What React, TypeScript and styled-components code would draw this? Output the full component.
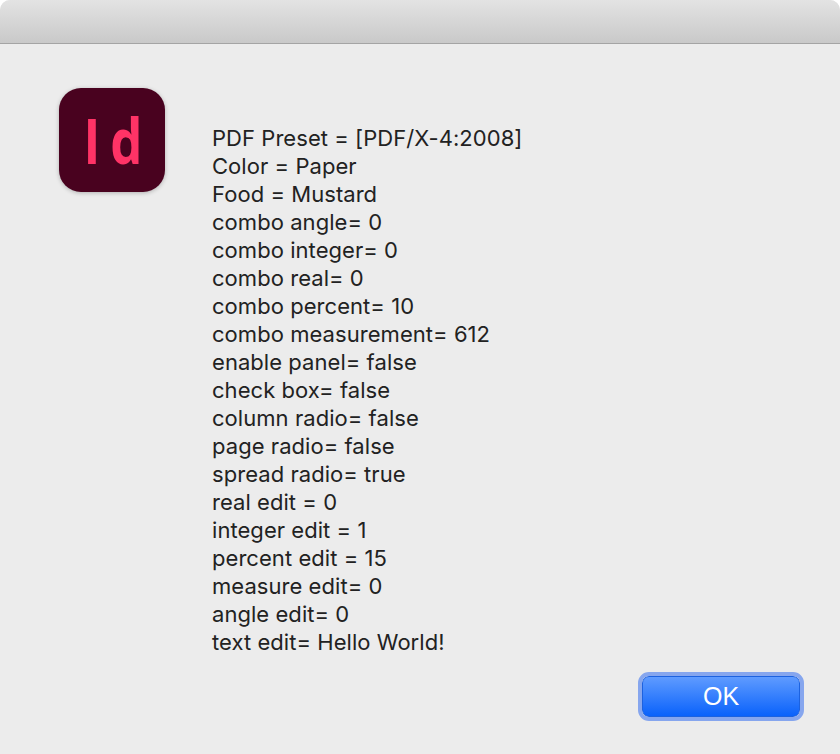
import React from "react";
import styled, { createGlobalStyle } from "styled-components";

const GlobalStyle = createGlobalStyle`
  html, body {
    margin: 0;
    padding: 0;
    background: #fff;
  }
`;

const Window = styled.div`
  width: 840px;
  height: 754px;
  display: flex;
  flex-direction: column;
  background: #ececec;
  border-radius: 10px 10px 0 0;
  overflow: hidden;
  font-family: Inter, "Liberation Sans", sans-serif;
`;

const TitleBar = styled.div`
  height: 43px;
  flex: none;
  background: linear-gradient(#e3e3e3, #c9c9c9);
  border-bottom: 1px solid #a4a4a4;
`;

const Body = styled.div`
  flex: 1;
  display: flex;
  padding: 44px 0 0 59px;
`;

const AppIcon = styled.div`
  width: 106px;
  height: 104px;
  flex: none;
  border-radius: 22px;
  background: #49021f;
  box-shadow: 0 1px 4px rgba(0, 0, 0, 0.25);
  display: flex;
  align-items: center;
  justify-content: center;
  color: #ff3366;
  font-family: "Open Sans", sans-serif;
  font-size: 62px;
  font-weight: 700;
  line-height: 1;
`;

const IconLetters = styled.span`
  display: block;
  letter-spacing: 12px;
  margin-right: -12px;
  transform: scaleX(0.82);
`;

const Lines = styled.div`
  margin: 36px 0 0 47px;
  color: #222;
  font-size: 22px;
  letter-spacing: 0.05px;
  line-height: 28px;
`;

const Line = styled.div`
  white-space: pre;
`;

const Footer = styled.div`
  flex: none;
  display: flex;
  justify-content: flex-end;
  padding: 0 40px 37px 0;
`;

const OkButton = styled.button`
  width: 158px;
  height: 41px;
  box-sizing: border-box;
  border: 1px solid #1c62e0;
  border-radius: 7px;
  outline: 4px solid #86a6ee;
  outline-offset: 0;
  margin: 0;
  padding: 0;
  background: linear-gradient(#5f9bff, #0a62fb);
  color: #fff;
  font-family: "Liberation Sans", Arial, sans-serif;
  font-size: 25px;
  line-height: 1;
`;

const lines = [
  "PDF Preset = [PDF/X-4:2008]",
  "Color = Paper",
  "Food = Mustard",
  "combo angle= 0",
  "combo integer= 0",
  "combo real= 0",
  "combo percent= 10",
  "combo measurement= 612",
  "enable panel= false",
  "check box= false",
  "column radio= false",
  "page radio= false",
  "spread radio= true",
  "real edit = 0",
  "integer edit = 1",
  "percent edit = 15",
  "measure edit= 0",
  "angle edit= 0",
  "text edit= Hello World!",
];

const App = () => {
  return (
    <Window>
      <GlobalStyle />
      <TitleBar />
      <Body>
        <AppIcon>
          <IconLetters>Id</IconLetters>
        </AppIcon>
        <Lines>
          {lines.map((line) => (
            <Line key={line}>{line}</Line>
          ))}
        </Lines>
      </Body>
      <Footer>
        <OkButton>OK</OkButton>
      </Footer>
    </Window>
  );
};

export default App;
